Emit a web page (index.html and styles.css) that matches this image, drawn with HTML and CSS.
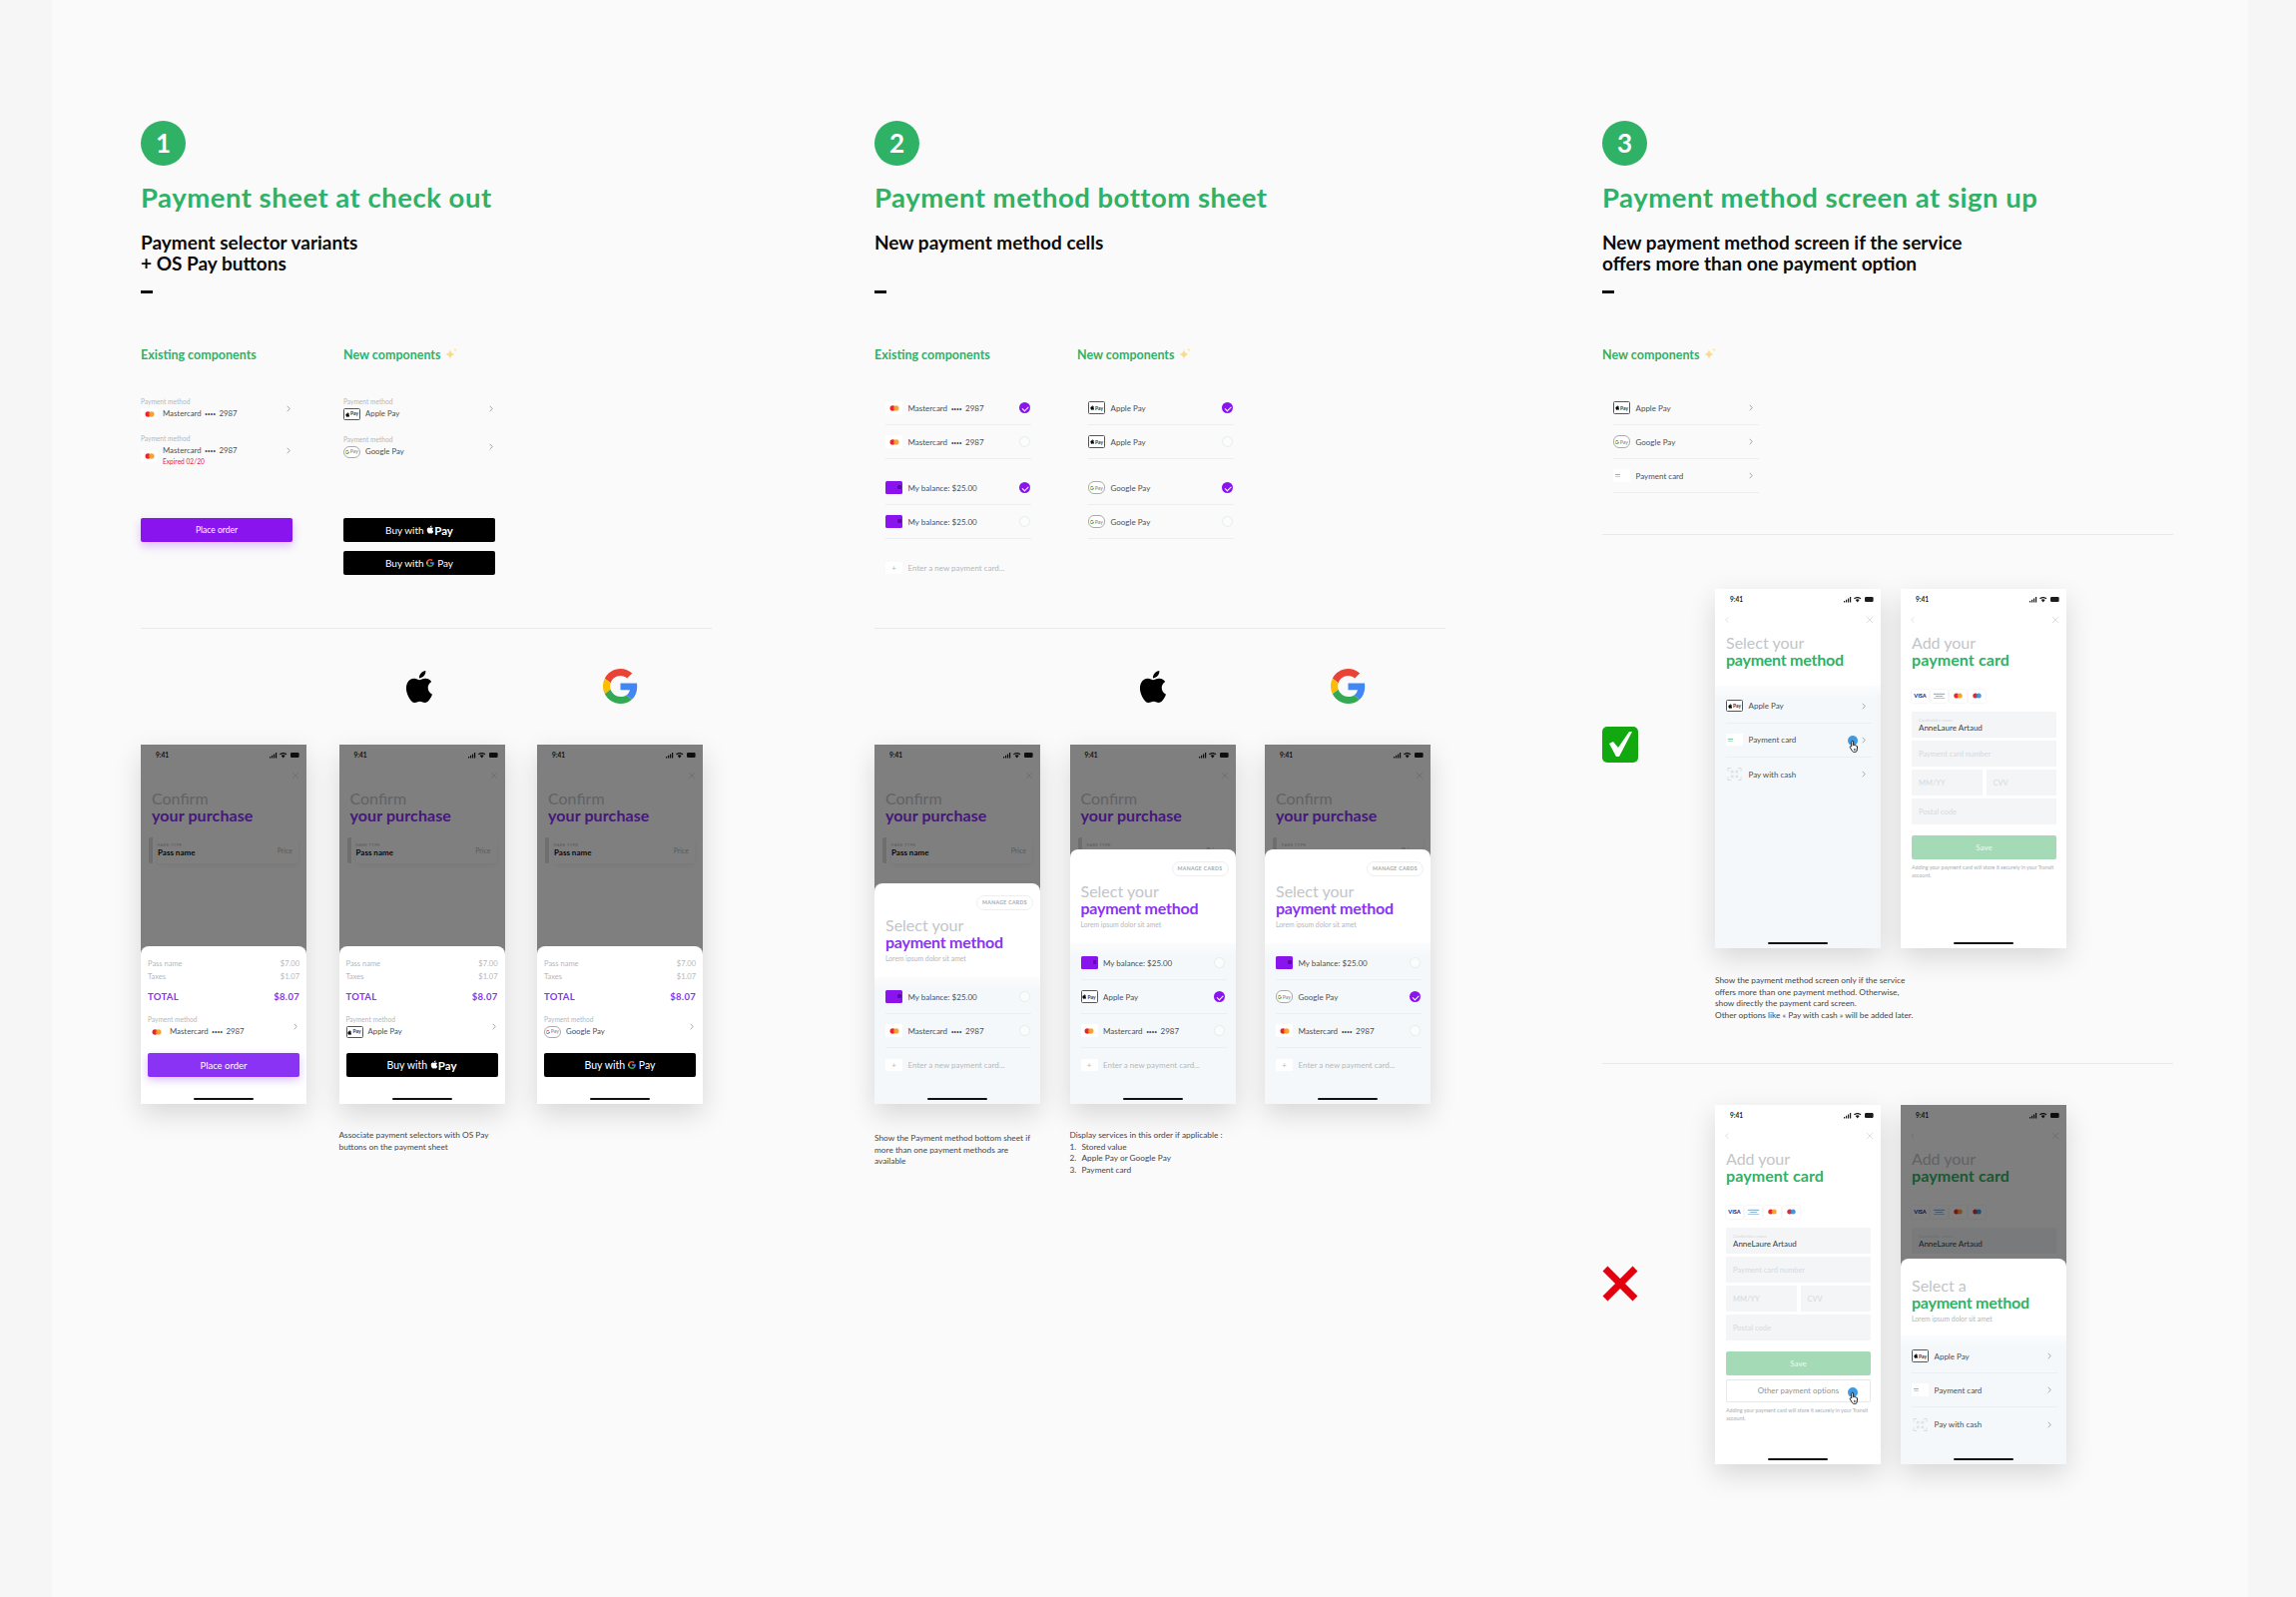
FILE: index.html
```html
<!DOCTYPE html>
<html lang="en">
<head>
  <meta charset="UTF-8" />
  <title>Payment method flows</title>
  <link rel="stylesheet" href="styles.css">
</head>
<body>
  <!-- shared icons -->
  <svg class="sprite" xmlns="http://www.w3.org/2000/svg">
    <symbol id="apple" viewBox="0 0 24 24"><path fill="currentColor" d="M12.152 6.896c-.948 0-2.415-1.078-3.96-1.04-2.04.027-3.91 1.183-4.961 3.014-2.117 3.675-.546 9.103 1.519 12.09 1.013 1.454 2.208 3.09 3.792 3.039 1.52-.065 2.09-.987 3.935-.987 1.831 0 2.35.987 3.96.948 1.637-.026 2.676-1.48 3.676-2.948 1.156-1.688 1.636-3.325 1.662-3.415-.039-.013-3.182-1.221-3.22-4.857-.026-3.04 2.48-4.494 2.597-4.559-1.429-2.09-3.623-2.324-4.39-2.376-2-.156-3.675 1.09-4.61 1.09zM15.53 3.83c.843-1.012 1.4-2.427 1.245-3.83-1.207.052-2.662.805-3.532 1.818-.78.896-1.454 2.338-1.273 3.714 1.338.104 2.715-.688 3.559-1.701"/></symbol>
    <symbol id="google" viewBox="0 0 48 48">
      <path fill="#EA4335" d="M24 9.5c3.54 0 6.71 1.22 9.21 3.6l6.85-6.85C35.9 2.38 30.47 0 24 0 14.62 0 6.51 5.38 2.56 13.22l7.98 6.19C12.43 13.72 17.74 9.5 24 9.5z"/>
      <path fill="#4285F4" d="M46.98 24.55c0-1.57-.15-3.09-.38-4.55H24v9.02h12.94c-.58 2.96-2.26 5.48-4.78 7.18l7.73 6c4.51-4.18 7.09-10.36 7.09-17.65z"/>
      <path fill="#FBBC05" d="M10.53 28.59c-.48-1.45-.76-2.99-.76-4.59s.27-3.14.76-4.59l-7.98-6.19C.92 16.46 0 20.12 0 24c0 3.88.92 7.54 2.56 10.78l7.97-6.19z"/>
      <path fill="#34A853" d="M24 48c6.48 0 11.93-2.13 15.89-5.81l-7.73-6c-2.15 1.45-4.92 2.3-8.16 2.3-6.26 0-11.57-4.22-13.47-9.91l-7.98 6.19C6.51 42.62 14.62 48 24 48z"/>
    </symbol>
    <symbol id="status" viewBox="0 0 30 7">
      <path fill="currentColor" d="M0 5h1.2v1.6H0zM2 3.8h1.2v2.8H2zM4 2.6h1.2v4H4zM6 1h1.2v5.6H6z"/>
      <path fill="currentColor" d="M10 2.4C12 .4 15.4.4 17.4 2.4l-.9.9c-1.6-1.5-4-1.5-5.6 0zM11.7 4c1-1 3-1 4 0l-2 2.6z"/>
      <rect fill="currentColor" x="21" y="1" width="8.6" height="5" rx="1.2"/>
    </symbol>
    <symbol id="chevron" viewBox="0 0 6 10"><path fill="none" stroke="currentColor" stroke-width="1.2" d="M1 1l4 4-4 4"/></symbol>
    <symbol id="back" viewBox="0 0 6 10"><path fill="none" stroke="currentColor" stroke-width="1.2" d="M5 1L1 5l4 4"/></symbol>
    <symbol id="close" viewBox="0 0 10 10"><path fill="none" stroke="currentColor" stroke-width="1" d="M1 1l8 8M9 1L1 9"/></symbol>
    <symbol id="mc" viewBox="0 0 16 10"><circle cx="6.2" cy="5" r="2.7" fill="#e8262a"/><circle cx="9.8" cy="5" r="2.7" fill="#f59b1d" opacity=".9"/></symbol>
    <symbol id="maestro" viewBox="0 0 16 10"><circle cx="6.2" cy="5" r="2.7" fill="#dd2a3a"/><circle cx="9.8" cy="5" r="2.7" fill="#2f8fd8" opacity=".9"/></symbol>
    <symbol id="amex" viewBox="0 0 16 10"><path fill="#8fb7d8" d="M2 2.6h12v1.3H2zM4 5h8v1H4zM2 7h12v.8H2z"/></symbol>
    <symbol id="cash" viewBox="0 0 16 16">
      <path fill="none" stroke="#cfd4d8" stroke-width=".8" d="M1 5V1.6h3.4M11.6 1.6H15V5M15 11v3.4h-3.4M4.4 14.4H1V11"/>
      <path fill="#dfe3e6" d="M4 4h3v3H4zM9 4h3v3H9zM4 9h3v3H4zM9 9h3v3H9z"/>
    </symbol>
    <symbol id="hand" viewBox="0 0 12 15"><path fill="#fff" stroke="#111" stroke-width="1" d="M4 1.2c.6 0 1 .4 1 1V6c.6-.4 1.3-.2 1.5.2.6-.3 1.2-.1 1.4.4.7-.2 1.3.2 1.4.7v3c0 1.8-1 3.2-2.6 3.2H6c-1 0-1.8-.5-2.3-1.3L1.4 8.4c-.3-.5-.1-1 .3-1.3.4-.2.9-.1 1.3.3V2.2c0-.6.4-1 1-1z"/><path stroke="#111" stroke-width=".7" d="M6 9.5v2.6M7.6 9.5v2.6"/></symbol>
    <symbol id="sparkle" viewBox="0 0 14 14">
      <path fill="#f8dc8c" d="M6 2c.5 3 1.600 4.300 4.600 5C7.600 7.700 6.500 9 6 12 5.500 9 4.400 7.700 1.400 7 4.400 6.300 5.500 5 6 2z"/>
      <path fill="#fbe7a8" d="M11 .5c.2 1.200.7 1.700 1.900 2-1.200.3-1.700.8-1.900 2-.2-1.200-.7-1.700-1.900-2 1.200-.3 1.700-.8 1.900-2z"/>
    </symbol>
  </svg>

  <main class="board">

    <!-- 1. checkout -->
    <section class="section">
      <header class="intro">
        <div class="step">1</div>
        <h1>Payment sheet at check out</h1>
        <h2>Payment selector variants<br>+ OS Pay buttons</h2>
        <div class="dash"></div>
      </header>

      <div class="components components--tall">
        <div class="component-col">
          <h3>Existing components</h3>
          <div class="selectors">
            <div class="selector">
              <div>
                <p class="selector__label">Payment method</p>
                <div class="selector__row"><span class="badge badge--white"><svg><use href="#mc"/></svg></span><span>Mastercard <i class="dots">••••</i> 2987</span></div>
              </div>
              <svg class="chev"><use href="#chevron"/></svg>
            </div>
            <div class="selector selector--gap">
              <div>
                <p class="selector__label">Payment method</p>
                <div class="selector__row selector__row--two"><span class="badge badge--white"><svg><use href="#mc"/></svg></span><span>Mastercard <i class="dots">••••</i> 2987<br><em class="expired">Expired 02/20</em></span></div>
              </div>
              <svg class="chev"><use href="#chevron"/></svg>
            </div>
          </div>
          <div class="btn btn--purple">Place order</div>
        </div>
        <div class="component-col">
          <h3>New components <svg class="sparkle"><use href="#sparkle"/></svg></h3>
          <div class="selectors">
            <div class="selector">
              <div>
                <p class="selector__label">Payment method</p>
                <div class="selector__row"><span class="badge badge--apple"><svg><use href="#apple"/></svg>Pay</span><span>Apple Pay</span></div>
              </div>
              <svg class="chev"><use href="#chevron"/></svg>
            </div>
            <div class="selector selector--gap2">
              <div>
                <p class="selector__label">Payment method</p>
                <div class="selector__row"><span class="badge badge--google"><svg><use href="#google"/></svg>Pay</span><span>Google Pay</span></div>
              </div>
              <svg class="chev"><use href="#chevron"/></svg>
            </div>
          </div>
          <div class="btn btn--black">Buy with <svg class="btn__apple"><use href="#apple"/></svg><b>Pay</b></div>
          <div class="btn btn--black btn--next">Buy with <svg class="btn__g"><use href="#google"/></svg>Pay</div>
        </div>
      </div>

      <div class="devices devices--wide">
        <div class="device">
          <div class="logo"></div>
          <div class="phone">
            <div class="status"><span>9:41</span><svg><use href="#status"/></svg></div>
            <div class="nav nav--end"><svg class="nav__close"><use href="#close"/></svg></div>
            <div class="title title--purple"><span>Confirm</span><b>your purchase</b></div>
            <div class="pass"><div class="pass__card"><div><small>FARE TYPE</small><strong>Pass name</strong></div><span>Price</span></div></div>
            <div class="scrim"></div>
            <div class="sheet sheet--order">
              <div class="line"><span>Pass name</span><span>$7.00</span></div>
              <div class="line"><span>Taxes</span><span>$1.07</span></div>
              <div class="total"><span>TOTAL</span><span>$8.07</span></div>
              <div class="selector selector--sheet">
                <div>
                  <p class="selector__label">Payment method</p>
                  <div class="selector__row"><span class="badge badge--white"><svg><use href="#mc"/></svg></span><span>Mastercard <i class="dots">••••</i> 2987</span></div>
                </div>
                <svg class="chev"><use href="#chevron"/></svg>
              </div>
              <div class="btn btn--violet">Place order</div>
            </div>
            <div class="home"></div>
          </div>
        </div>
        <div class="device">
          <div class="logo"><svg class="logo__apple"><use href="#apple"/></svg></div>
          <div class="phone">
            <div class="status"><span>9:41</span><svg><use href="#status"/></svg></div>
            <div class="nav nav--end"><svg class="nav__close"><use href="#close"/></svg></div>
            <div class="title title--purple"><span>Confirm</span><b>your purchase</b></div>
            <div class="pass"><div class="pass__card"><div><small>FARE TYPE</small><strong>Pass name</strong></div><span>Price</span></div></div>
            <div class="scrim"></div>
            <div class="sheet sheet--order">
              <div class="line"><span>Pass name</span><span>$7.00</span></div>
              <div class="line"><span>Taxes</span><span>$1.07</span></div>
              <div class="total"><span>TOTAL</span><span>$8.07</span></div>
              <div class="selector selector--sheet">
                <div>
                  <p class="selector__label">Payment method</p>
                  <div class="selector__row"><span class="badge badge--apple"><svg><use href="#apple"/></svg>Pay</span><span>Apple Pay</span></div>
                </div>
                <svg class="chev"><use href="#chevron"/></svg>
              </div>
              <div class="btn btn--black btn--big">Buy with <svg class="btn__apple"><use href="#apple"/></svg><b>Pay</b></div>
            </div>
            <div class="home"></div>
          </div>
          <p class="caption">Associate payment selectors with OS Pay buttons on the payment sheet</p>
        </div>
        <div class="device">
          <div class="logo"><svg class="logo__google"><use href="#google"/></svg></div>
          <div class="phone">
            <div class="status"><span>9:41</span><svg><use href="#status"/></svg></div>
            <div class="nav nav--end"><svg class="nav__close"><use href="#close"/></svg></div>
            <div class="title title--purple"><span>Confirm</span><b>your purchase</b></div>
            <div class="pass"><div class="pass__card"><div><small>FARE TYPE</small><strong>Pass name</strong></div><span>Price</span></div></div>
            <div class="scrim"></div>
            <div class="sheet sheet--order">
              <div class="line"><span>Pass name</span><span>$7.00</span></div>
              <div class="line"><span>Taxes</span><span>$1.07</span></div>
              <div class="total"><span>TOTAL</span><span>$8.07</span></div>
              <div class="selector selector--sheet">
                <div>
                  <p class="selector__label">Payment method</p>
                  <div class="selector__row"><span class="badge badge--google"><svg><use href="#google"/></svg>Pay</span><span>Google Pay</span></div>
                </div>
                <svg class="chev"><use href="#chevron"/></svg>
              </div>
              <div class="btn btn--black btn--big">Buy with <svg class="btn__g"><use href="#google"/></svg>Pay</div>
            </div>
            <div class="home"></div>
          </div>
        </div>
      </div>
    </section>

    <!-- 2. bottom sheet -->
    <section class="section">
      <header class="intro">
        <div class="step">2</div>
        <h1>Payment method bottom sheet</h1>
        <h2>New payment method cells</h2>
        <div class="dash"></div>
      </header>

      <div class="components components--tall">
        <div class="component-col">
          <h3>Existing components</h3>
          <div class="rows">
            <div class="row"><span class="badge badge--white"><svg><use href="#mc"/></svg></span><span>Mastercard <i class="dots">••••</i> 2987</span><span class="radio radio--on"></span></div>
            <div class="row"><span class="badge badge--white"><svg><use href="#mc"/></svg></span><span>Mastercard <i class="dots">••••</i> 2987</span><span class="radio"></span></div>
            <div class="row row--group"><span class="badge badge--balance"></span><span>My balance: $25.00</span><span class="radio radio--on"></span></div>
            <div class="row"><span class="badge badge--balance"></span><span>My balance: $25.00</span><span class="radio"></span></div>
            <div class="row row--add row--group"><span class="badge badge--add">+</span><span>Enter a new payment card...</span></div>
          </div>
        </div>
        <div class="component-col">
          <h3>New components <svg class="sparkle"><use href="#sparkle"/></svg></h3>
          <div class="rows">
            <div class="row"><span class="badge badge--apple"><svg><use href="#apple"/></svg>Pay</span><span>Apple Pay</span><span class="radio radio--on"></span></div>
            <div class="row"><span class="badge badge--apple"><svg><use href="#apple"/></svg>Pay</span><span>Apple Pay</span><span class="radio"></span></div>
            <div class="row row--group"><span class="badge badge--google"><svg><use href="#google"/></svg>Pay</span><span>Google Pay</span><span class="radio radio--on"></span></div>
            <div class="row"><span class="badge badge--google"><svg><use href="#google"/></svg>Pay</span><span>Google Pay</span><span class="radio"></span></div>
          </div>
        </div>
      </div>

      <div class="devices">
        <div class="device">
          <div class="logo"></div>
          <div class="phone">
            <div class="status"><span>9:41</span><svg><use href="#status"/></svg></div>
            <div class="nav nav--end"><svg class="nav__close"><use href="#close"/></svg></div>
            <div class="title title--purple"><span>Confirm</span><b>your purchase</b></div>
            <div class="pass"><div class="pass__card"><div><small>FARE TYPE</small><strong>Pass name</strong></div><span>Price</span></div></div>
            <div class="scrim"></div>
            <div class="sheet">
              <div class="sheet__head">
                <div class="pill">MANAGE CARDS</div>
                <div class="title title--purple title--sheet"><span>Select your</span><b class="tight">payment method</b></div>
                <p class="lorem">Lorem ipsum dolor sit amet</p>
              </div>
              <div class="methods">
                <div class="row"><span class="badge badge--balance"></span><span>My balance: $25.00</span><span class="radio"></span></div>
                <div class="row"><span class="badge badge--white"><svg><use href="#mc"/></svg></span><span>Mastercard <i class="dots">••••</i> 2987</span><span class="radio"></span></div>
                <div class="row row--add"><span class="badge badge--add">+</span><span>Enter a new payment card...</span></div>
              </div>
            </div>
            <div class="home"></div>
          </div>
          <p class="caption caption--low">Show the Payment method bottom sheet if more than one payment methods are available</p>
        </div>
        <div class="device">
          <div class="logo"><svg class="logo__apple"><use href="#apple"/></svg></div>
          <div class="phone">
            <div class="status"><span>9:41</span><svg><use href="#status"/></svg></div>
            <div class="nav nav--end"><svg class="nav__close"><use href="#close"/></svg></div>
            <div class="title title--purple"><span>Confirm</span><b>your purchase</b></div>
            <div class="pass"><div class="pass__card"><div><small>FARE TYPE</small><strong>Pass name</strong></div><span>Price</span></div></div>
            <div class="scrim"></div>
            <div class="sheet">
              <div class="sheet__head">
                <div class="pill">MANAGE CARDS</div>
                <div class="title title--purple title--sheet"><span>Select your</span><b class="tight">payment method</b></div>
                <p class="lorem">Lorem ipsum dolor sit amet</p>
              </div>
              <div class="methods">
                <div class="row"><span class="badge badge--balance"></span><span>My balance: $25.00</span><span class="radio"></span></div>
                <div class="row"><span class="badge badge--apple"><svg><use href="#apple"/></svg>Pay</span><span>Apple Pay</span><span class="radio radio--on"></span></div>
                <div class="row"><span class="badge badge--white"><svg><use href="#mc"/></svg></span><span>Mastercard <i class="dots">••••</i> 2987</span><span class="radio"></span></div>
                <div class="row row--add"><span class="badge badge--add">+</span><span>Enter a new payment card...</span></div>
              </div>
            </div>
            <div class="home"></div>
          </div>
          <div class="caption">
            Display services in this order if applicable :
            <ol>
              <li>Stored value</li>
              <li>Apple Pay or Google Pay</li>
              <li>Payment card</li>
            </ol>
          </div>
        </div>
        <div class="device">
          <div class="logo"><svg class="logo__google"><use href="#google"/></svg></div>
          <div class="phone">
            <div class="status"><span>9:41</span><svg><use href="#status"/></svg></div>
            <div class="nav nav--end"><svg class="nav__close"><use href="#close"/></svg></div>
            <div class="title title--purple"><span>Confirm</span><b>your purchase</b></div>
            <div class="pass"><div class="pass__card"><div><small>FARE TYPE</small><strong>Pass name</strong></div><span>Price</span></div></div>
            <div class="scrim"></div>
            <div class="sheet">
              <div class="sheet__head">
                <div class="pill">MANAGE CARDS</div>
                <div class="title title--purple title--sheet"><span>Select your</span><b class="tight">payment method</b></div>
                <p class="lorem">Lorem ipsum dolor sit amet</p>
              </div>
              <div class="methods">
                <div class="row"><span class="badge badge--balance"></span><span>My balance: $25.00</span><span class="radio"></span></div>
                <div class="row"><span class="badge badge--google"><svg><use href="#google"/></svg>Pay</span><span>Google Pay</span><span class="radio radio--on"></span></div>
                <div class="row"><span class="badge badge--white"><svg><use href="#mc"/></svg></span><span>Mastercard <i class="dots">••••</i> 2987</span><span class="radio"></span></div>
                <div class="row row--add"><span class="badge badge--add">+</span><span>Enter a new payment card...</span></div>
              </div>
            </div>
            <div class="home"></div>
          </div>
        </div>
      </div>
    </section>

    <!-- 3. sign up -->
    <section class="section">
      <header class="intro">
        <div class="step">3</div>
        <h1>Payment method screen at sign up</h1>
        <h2>New payment method screen if the service<br>offers more than one payment option</h2>
        <div class="dash"></div>
      </header>

      <div class="components components--short">
        <div class="component-col">
          <h3>New components <svg class="sparkle"><use href="#sparkle"/></svg></h3>
          <div class="rows">
            <div class="row"><span class="badge badge--apple"><svg><use href="#apple"/></svg>Pay</span><span>Apple Pay</span><svg class="chev chev--row"><use href="#chevron"/></svg></div>
            <div class="row"><span class="badge badge--google"><svg><use href="#google"/></svg>Pay</span><span>Google Pay</span><svg class="chev chev--row"><use href="#chevron"/></svg></div>
            <div class="row"><span class="badge badge--card"><i></i></span><span>Payment card</span><svg class="chev chev--row"><use href="#chevron"/></svg></div>
          </div>
        </div>
      </div>

      <div class="verdict verdict--good">
        <svg class="verdict__mark" viewBox="0 0 36 36">
          <rect width="36" height="36" rx="5" fill="#12a80f"/>
          <path fill="#fff" d="M7 17l4-2 5 6L27 5h3L17 30h-3z"/>
        </svg>
        <div>
          <div class="pair">
            <div class="phone">
              <div class="status"><span>9:41</span><svg><use href="#status"/></svg></div>
              <div class="nav"><svg class="nav__back"><use href="#back"/></svg><svg class="nav__close"><use href="#close"/></svg></div>
              <div class="title title--green"><span>Select your</span><b class="tight">payment method</b></div>
              <div class="methods methods--fill">
                <div class="row"><span class="badge badge--apple"><svg><use href="#apple"/></svg>Pay</span><span>Apple Pay</span><svg class="chev chev--row"><use href="#chevron"/></svg></div>
                <div class="row"><span class="badge badge--card"><i></i></span><span>Payment card</span><span class="tap tap--row"><svg><use href="#hand"/></svg></span><svg class="chev chev--row"><use href="#chevron"/></svg></div>
                <div class="row row--plain"><span class="badge badge--cash"><svg><use href="#cash"/></svg></span><span>Pay with cash</span><svg class="chev chev--row"><use href="#chevron"/></svg></div>
              </div>
              <div class="home"></div>
            </div>
            <div class="phone">
              <div class="status"><span>9:41</span><svg><use href="#status"/></svg></div>
              <div class="nav"><svg class="nav__back"><use href="#back"/></svg><svg class="nav__close"><use href="#close"/></svg></div>
              <div class="title title--green"><span>Add your</span><b>payment card</b></div>
              <div class="form">
                <div class="card-logos"><span class="visa">VISA</span><span><svg><use href="#amex"/></svg></span><span><svg><use href="#mc"/></svg></span><span><svg><use href="#maestro"/></svg></span></div>
                <div class="field field--filled"><small>Cardholder name</small>AnneLaure Artaud</div>
                <div class="field">Payment card number</div>
                <div class="field-pair"><div class="field">MM/YY</div><div class="field">CVV</div></div>
                <div class="field">Postal code</div>
                <div class="save">Save</div>
                <p class="fine">Adding your payment card will store it securely in your Transit account.</p>
              </div>
              <div class="home"></div>
            </div>
          </div>
          <p class="caption caption--wide">Show the payment method screen only if the service<br>offers more than one payment method. Otherwise,<br>show directly the payment card screen.<br>Other options like « Pay with cash » will be added later.</p>
        </div>
      </div>

      <div class="verdict verdict--bad">
        <svg class="verdict__mark" viewBox="0 0 36 36">
          <path fill="none" stroke="#e3000f" stroke-width="7" d="M3 3l30 30M33 3L3 33"/>
        </svg>
        <div class="pair">
          <div class="phone">
            <div class="status"><span>9:41</span><svg><use href="#status"/></svg></div>
            <div class="nav"><svg class="nav__back"><use href="#back"/></svg><svg class="nav__close"><use href="#close"/></svg></div>
            <div class="title title--green"><span>Add your</span><b>payment card</b></div>
            <div class="form">
              <div class="card-logos"><span class="visa">VISA</span><span><svg><use href="#amex"/></svg></span><span><svg><use href="#mc"/></svg></span><span><svg><use href="#maestro"/></svg></span></div>
              <div class="field field--filled"><small>Cardholder name</small>AnneLaure Artaud</div>
              <div class="field">Payment card number</div>
              <div class="field-pair"><div class="field">MM/YY</div><div class="field">CVV</div></div>
              <div class="field">Postal code</div>
              <div class="save">Save</div>
              <div class="other">Other payment options<span class="tap tap--other"><svg><use href="#hand"/></svg></span></div>
              <p class="fine">Adding your payment card will store it securely in your Transit account.</p>
            </div>
            <div class="home"></div>
          </div>
          <div class="phone">
            <div class="status"><span>9:41</span><svg><use href="#status"/></svg></div>
            <div class="nav"><svg class="nav__back"><use href="#back"/></svg><svg class="nav__close"><use href="#close"/></svg></div>
            <div class="title title--green"><span>Add your</span><b>payment card</b></div>
            <div class="form">
              <div class="card-logos"><span class="visa">VISA</span><span><svg><use href="#amex"/></svg></span><span><svg><use href="#mc"/></svg></span><span><svg><use href="#maestro"/></svg></span></div>
              <div class="field field--filled"><small>Cardholder name</small>AnneLaure Artaud</div>
            </div>
            <div class="scrim"></div>
            <div class="sheet">
              <div class="sheet__head sheet__head--plain">
                <div class="title title--green title--sheet"><span>Select a</span><b class="tight">payment method</b></div>
                <p class="lorem">Lorem ipsum dolor sit amet</p>
              </div>
              <div class="methods methods--tight">
                <div class="row"><span class="badge badge--apple"><svg><use href="#apple"/></svg>Pay</span><span>Apple Pay</span><svg class="chev chev--row"><use href="#chevron"/></svg></div>
                <div class="row"><span class="badge badge--card"><i></i></span><span>Payment card</span><svg class="chev chev--row"><use href="#chevron"/></svg></div>
                <div class="row row--plain"><span class="badge badge--cash"><svg><use href="#cash"/></svg></span><span>Pay with cash</span><svg class="chev chev--row"><use href="#chevron"/></svg></div>
              </div>
            </div>
            <div class="home"></div>
          </div>
        </div>
      </div>
    </section>

  </main>
</body>
</html>
```

FILE: styles.css
```css
:root {
  --green: #2fb266;
  --purple: #8a14ee;
  --violet: #8a33f5;
  --text: #4b5056;
  --muted: #b4b8bc;
  --line: #eceff1;
  --panel: #f5f8fa;
}

* {
  box-sizing: border-box;
}

body {
  margin: 0;
  background: #f6f6f6;
  font-family: Lato, "Liberation Sans", sans-serif;
  color: var(--text);
}

p,
h1,
h2,
h3,
ol {
  margin: 0;
}

i,
em {
  font-style: normal;
}

.sprite {
  display: none;
}

.board {
  display: grid;
  grid-template-columns: 735px 729px 572px;
  width: 2200px;
  height: 1600px;
  margin-left: 52px;
  padding: 121px 0 0 89px;
  background: #fafafa;
  overflow: hidden;
}

.section {
  width: 572px;
}

/* section header */
.intro {
  height: 226px;
}

.step {
  width: 45px;
  height: 45px;
  border-radius: 50%;
  background: var(--green);
  color: #fff;
  font-size: 26px;
  font-weight: 700;
  line-height: 45px;
  text-align: center;
}

h1 {
  margin-top: 16px;
  color: var(--green);
  font-size: 27.5px;
  font-weight: 700;
  line-height: 32px;
  letter-spacing: 0.5px;
  white-space: nowrap;
}

h2 {
  height: 42px;
  margin-top: 17.500px;
  color: #0b0b0b;
  font-size: 19px;
  font-weight: 700;
  line-height: 21px;
  white-space: nowrap;
}

.dash {
  width: 12px;
  height: 3px;
  margin-top: 17.500px;
  background: #111;
}

/* component lists */
.components {
  display: flex;
  border-bottom: 1px solid #e9e9e9;
}

.components--tall {
  height: 283px;
}

.components--short {
  height: 189px;
}

.component-col {
  width: 203px;
}

h3 {
  display: flex;
  align-items: center;
  gap: 3px;
  height: 16px;
  color: var(--green);
  font-size: 12.5px;
  font-weight: 700;
}

.sparkle {
  width: 14px;
  height: 14px;
}

.selectors {
  height: 156px;
  width: 152px;
  padding-top: 35px;
}

.selector {
  display: flex;
  align-items: center;
  justify-content: space-between;
  width: 152px;
  padding-right: 2px;
}

.selector--gap {
  margin-top: 14px;
}

.selector--gap2 {
  margin-top: 15px;
}

.selector__label {
  height: 8px;
  color: var(--muted);
  font-size: 6.6px;
  line-height: 8px;
}

.selector__row {
  display: flex;
  align-items: center;
  gap: 5px;
  height: 12px;
  margin-top: 3px;
  font-size: 7.8px;
  line-height: 9.500px;
}

.selector__row--two {
  height: 20px;
  margin-top: 4px;
}

.expired {
  color: #e2233a;
  font-size: 6.6px;
}

.dots {
  margin: 0 1.500px;
  font-size: 5px;
  letter-spacing: -0.2px;
}

.chev {
  flex: none;
  width: 4px;
  height: 7px;
  color: #8b9196;
}

.chev--row {
  margin-left: auto;
  margin-right: 5px;
}

/* small payment badges */
.badge {
  display: flex;
  flex: none;
  align-items: center;
  justify-content: center;
  width: 17px;
  height: 12.500px;
  font-size: 5px;
  font-weight: 700;
  color: #333;
}

.badge svg {
  width: 16px;
  height: 10px;
}

.badge--white {
  background: #fff;
  border-radius: 1.500px;
}

.badge--apple {
  border: 0.7px solid #555;
  border-radius: 1.500px;
  background: #fff;
}

.badge--apple svg {
  width: 4.500px;
  height: 5px;
  margin-right: 0.500px;
  color: #000;
}

.badge--google {
  border: 0.7px solid #aaa;
  border-radius: 6px;
  background: #fff;
  color: #999;
}

.badge--google svg {
  width: 4px;
  height: 4px;
  margin-right: 0.500px;
}

.badge--balance {
  position: relative;
  border-radius: 1.500px;
  background: var(--purple);
}

.badge--balance::after {
  content: "";
  position: absolute;
  right: 1.500px;
  top: 4px;
  width: 3.500px;
  height: 4px;
  border-radius: 1px;
  background: #5c0aa6;
}

.badge--add {
  background: #fff;
  border-radius: 1.500px;
  color: #b4b8bc;
  font-size: 8px;
  font-weight: 400;
}

.badge--card {
  position: relative;
  background: #fff;
}

.badge--card i {
  position: absolute;
  left: 2px;
  top: 5px;
  width: 5px;
  height: 1px;
  background: #6fcb97;
  box-shadow: 0 2px 0 -0.200px #6fcb97;
}

.badge--cash svg {
  width: 15px;
  height: 15px;
}

/* buttons */
.btn {
  display: flex;
  align-items: center;
  justify-content: center;
  width: 152px;
  height: 24px;
  border-radius: 2px;
  color: #fff;
  font-size: 8.5px;
  white-space: pre;
}

.btn--purple {
  background: var(--purple);
  box-shadow: 0 4px 10px rgba(138, 20, 238, 0.25);
}

.btn--violet {
  margin-top: 15px;
  background: var(--violet);
  box-shadow: 0 3px 8px rgba(138, 51, 245, 0.3);
  font-size: 9.5px;
}

.btn--black {
  background: #000;
  font-size: 10px;
}

.btn--next {
  margin-top: 9px;
}

.btn--big {
  margin-top: 15px;
  font-size: 10.5px;
}

.btn__apple {
  width: 8px;
  height: 9px;
  margin-bottom: 1px;
}

.btn b {
  font-size: 11.5px;
  font-weight: 700;
}

.btn__g {
  width: 8px;
  height: 8px;
  margin-right: 3px;
}

/* rows */
.rows {
  width: 157px;
  margin-top: 29px;
  padding-left: 11px;
}

.row {
  display: flex;
  align-items: center;
  gap: 5.500px;
  height: 34px;
  padding-right: 1.500px;
  border-bottom: 1px solid var(--line);
  font-size: 8px;
}

.row--group {
  margin-top: 12px;
}

.row--add,
.row--plain {
  border-bottom: 0;
}

.row--add {
  color: var(--muted);
}

.radio {
  flex: none;
  width: 11px;
  height: 11px;
  margin-left: auto;
  border: 1px solid #e9ecee;
  border-radius: 50%;
  background: #fbfcfc;
}

.radio--on {
  position: relative;
  border: 0;
  background: var(--purple);
}

.radio--on::after {
  content: "";
  position: absolute;
  left: 3px;
  top: 3.500px;
  width: 5px;
  height: 2.500px;
  border-left: 1.200px solid #fff;
  border-bottom: 1.200px solid #fff;
  transform: rotate(-45deg);
}

/* device columns */
.devices {
  display: flex;
  gap: 29.500px;
  margin-top: 40px;
}

.devices--wide {
  gap: 32.500px;
}

.device {
  width: 166px;
}

.logo {
  display: flex;
  justify-content: center;
  height: 36px;
  margin-bottom: 40px;
}

.logo__apple {
  width: 32px;
  height: 36px;
  color: #000;
}

.devices--wide .logo__apple {
  margin-right: 6px;
}

.logo__google {
  width: 35px;
  height: 35px;
}

.phone {
  position: relative;
  display: flex;
  flex-direction: column;
  flex: none;
  width: 166px;
  height: 360px;
  overflow: hidden;
  background: #fff;
  box-shadow: 0 10px 26px rgba(0, 0, 0, 0.14);
}

.status {
  display: flex;
  align-items: center;
  justify-content: space-between;
  height: 20px;
  padding: 0 7px 0 15px;
  color: #1c1c1c;
  font-size: 6.5px;
  font-weight: 700;
}

.status svg {
  width: 30px;
  height: 7px;
}

.nav {
  display: flex;
  align-items: center;
  justify-content: space-between;
  height: 21px;
  padding: 0 7px 0 10px;
  color: #d3d6d9;
}

.nav--end {
  justify-content: flex-end;
}

.nav__back {
  width: 4px;
  height: 8px;
}

.nav__close {
  width: 8px;
  height: 8px;
}

.title {
  display: flex;
  flex-direction: column;
  margin-top: 4px;
  padding-left: 11px;
  color: #c2c5c9;
  font-size: 16px;
  line-height: 17px;
  white-space: nowrap;
}

.title b {
  font-size: 16px;
  font-weight: 700;
  letter-spacing: 0.1px;
}

.title b.tight {
  letter-spacing: -0.25px;
}

.title--purple b {
  color: var(--violet);
}

.title--green b {
  color: var(--green);
}

.title--sheet {
  margin-top: 5.500px;
  padding-left: 4px;
}

.scrim {
  position: absolute;
  inset: 0;
  background: rgba(0, 0, 0, 0.5);
}

.home {
  position: absolute;
  left: 53px;
  bottom: 4px;
  width: 60px;
  height: 2px;
  border-radius: 1px;
  background: #111;
}

/* pass under the sheet */
.pass {
  margin: 13.500px 8px 0;
  padding-left: 5px;
  border-left: 4px solid #dcdcdc;
  border-radius: 2px;
}

.pass__card {
  display: flex;
  align-items: center;
  justify-content: space-between;
  height: 26px;
  padding: 0 6px 0 0;
  background: #fff;
  box-shadow: 0 2px 5px rgba(0, 0, 0, 0.06);
  color: var(--muted);
  font-size: 7px;
}

.pass__card small {
  display: block;
  font-size: 4.500px;
  letter-spacing: 0.2px;
}

.pass__card strong {
  display: block;
  color: #111;
  font-size: 8px;
  font-weight: 700;
}

/* bottom sheets */
.sheet {
  position: absolute;
  left: 0;
  right: 0;
  bottom: 0;
  overflow: hidden;
  border-radius: 8px 8px 0 0;
  background: #fff;
}

.sheet--order {
  height: 158px;
  padding: 10.500px 7px 0;
}

.line {
  display: flex;
  justify-content: space-between;
  color: var(--muted);
  font-size: 7.500px;
  line-height: 13px;
}

.total {
  display: flex;
  justify-content: space-between;
  margin-top: 8.500px;
  color: var(--violet);
  font-size: 9.500px;
  font-weight: 700;
  line-height: 12px;
  letter-spacing: 0.3px;
}

.selector--sheet {
  margin-top: 12px;
  padding-right: 2px;
}

.sheet__head {
  height: 94px;
  padding: 12px 7px 0 11px;
}

.sheet__head .title {
  padding-left: 0;
}

.sheet__head--plain {
  height: 77px;
  padding-top: 17.500px;
}

.sheet__head--plain .title {
  margin-top: 0;
}

.pill {
  width: 57px;
  height: 15px;
  margin-left: auto;
  border: 1px solid #eceeef;
  border-radius: 8px;
  color: #a5a9ad;
  font-size: 5.200px;
  font-weight: 700;
  letter-spacing: 0.3px;
  line-height: 13px;
  text-align: center;
}

.lorem {
  margin-top: 4.500px;
  color: var(--muted);
  font-size: 6.800px;
  line-height: 8px;
}

.methods {
  padding: 3px 9px 22px 11px;
  background: linear-gradient(#fbfcfd, var(--panel) 12px);
}

.methods--tight {
  padding-top: 4px;
  padding-bottom: 23px;
}

.methods--fill {
  flex: 1;
  margin-top: 17.500px;
  padding-top: 4px;
}

/* sign up */
.verdict {
  display: flex;
  border-bottom: 1px solid #e9e9e9;
}

.verdict--good {
  height: 530px;
  padding-top: 54px;
}

.verdict--bad {
  padding-top: 41px;
  border-bottom: 0;
}

.verdict__mark {
  flex: none;
  width: 36px;
  height: 36px;
  margin-right: 77px;
}

.verdict--good .verdict__mark {
  margin-top: 138px;
}

.verdict--bad .verdict__mark {
  margin-top: 161px;
}

.pair {
  display: flex;
  gap: 20px;
}

/* card form */
.form {
  padding: 21.500px 10px 0 11px;
}

.card-logos {
  display: flex;
  gap: 2px;
  height: 13px;
}

.card-logos span {
  display: flex;
  align-items: center;
  justify-content: center;
  width: 17px;
  border-radius: 1.500px;
  background: #fff;
  box-shadow: 0 0 2px rgba(0, 0, 0, 0.12);
}

.card-logos svg {
  width: 15px;
  height: 10px;
}

.visa {
  color: #24307e;
  font-size: 5.500px;
  font-weight: 900;
}

.field {
  display: flex;
  flex-direction: column;
  justify-content: center;
  width: 100%;
  height: 26px;
  margin-top: 3px;
  padding-left: 7px;
  border-radius: 1px;
  background: #f3f5f7;
  color: #d6dadd;
  font-size: 7.500px;
}

.field--filled {
  margin-top: 9.500px;
  color: #3a3f44;
  font-size: 8px;
}

.field small {
  color: #d6dadd;
  font-size: 4.500px;
}

.field-pair {
  display: flex;
  gap: 4px;
}

.save {
  height: 24px;
  margin-top: 11px;
  border-radius: 2px;
  background: #a4dab6;
  color: #dff3e6;
  font-size: 8px;
  font-weight: 700;
  line-height: 24px;
  text-align: center;
}

.other {
  position: relative;
  height: 23px;
  margin-top: 4px;
  border: 1px solid #e6e8ea;
  border-radius: 1px;
  color: #8d9297;
  font-size: 7.800px;
  letter-spacing: 0.1px;
  line-height: 21px;
  text-align: center;
}

.fine {
  margin-top: 4px;
  color: #a9adb2;
  font-size: 5.300px;
  line-height: 8px;
}

/* tap marker */
.tap {
  position: absolute;
  width: 10px;
  height: 10px;
  border-radius: 50%;
  background: #3d9be6;
}

.tap svg {
  position: absolute;
  left: 1px;
  top: 4px;
  width: 11px;
  height: 14px;
}

.tap--row {
  left: 133px;
  top: 147px;
}

.tap--other {
  left: 121px;
  top: 7px;
}

/* notes under the devices */
.caption {
  margin-top: 26px;
  color: #43474c;
  font-size: 8.300px;
  line-height: 11.600px;
}

.caption--low {
  margin-top: 29px;
}

.caption--wide {
  width: 240px;
  margin-top: 27px;
}

.caption ol {
  padding-left: 0;
  list-style: none;
  counter-reset: step;
}

.caption li {
  counter-increment: step;
}

.caption li::before {
  content: counter(step) ".";
  display: inline-block;
  width: 12px;
}
```
